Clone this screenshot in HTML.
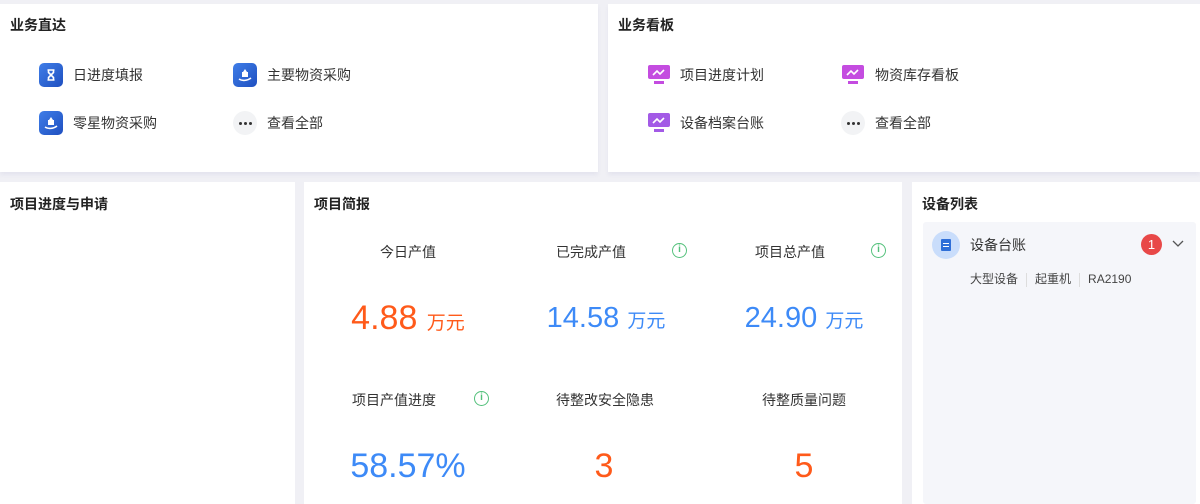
<!DOCTYPE html>
<html><head><meta charset="utf-8"><style>
*{margin:0;padding:0;box-sizing:border-box}
body{width:1200px;height:504px;background:#f0f0f5;font-family:"Liberation Sans","Noto Sans CJK SC",sans-serif;position:relative;overflow:hidden;color:#333}
.p{position:absolute;background:#fff}
.t{position:absolute;font-size:14px;font-weight:bold;color:#222}
.a{position:absolute;font-size:14px;color:#333;line-height:24px;white-space:nowrap}
.ic{position:absolute;width:24px;height:24px;border-radius:5px;background:linear-gradient(135deg,#3f7ee8,#1f4fc0)}
.more{position:absolute;width:24px;height:24px;border-radius:12px;background:#f2f3f5}
.more i{position:absolute;top:11px;width:3px;height:3px;border-radius:50%;background:#333}
.lb{position:absolute;font-size:14px;color:#333;transform:translateX(-50%);white-space:nowrap}
.num{position:absolute;font-size:34px;transform:translateX(-50%);white-space:nowrap;line-height:40px}
.num small{font-size:19px}
.bl{color:#3d8af7}.or{color:#ff5a1a}
.info{position:absolute;width:15px;height:15px;border:1.4px solid #52c07a;border-radius:50%;color:#52c07a;font-size:10px;text-align:center;line-height:12px;font-weight:bold}
</style></head><body>
<div class="p" style="left:0;top:4px;width:598px;height:168px;box-shadow:0 3px 4px #e4e4ee"></div>
<div class="p" style="left:608px;top:4px;width:592px;height:168px;box-shadow:0 3px 4px #e4e4ee"></div>
<div class="p" style="left:0;top:182px;width:295px;height:322px"></div>
<div class="p" style="left:304px;top:182px;width:598px;height:322px"></div>
<div class="p" style="left:912px;top:182px;width:288px;height:322px"></div>

<div class="t" style="left:10px;top:15px">业务直达</div>
<div class="ic" style="left:39px;top:63px"><svg width="24" height="24"><path d="M8.5 7h7M8.5 17h7M9.5 7v2.5l2.5 2.5 2.5-2.5V7M9.5 17v-2.5l2.5-2.5 2.5 2.5V17" stroke="#fff" stroke-width="1.6" fill="none"/></svg></div>
<div class="a" style="left:73px;top:63px">日进度填报</div>
<div class="ic" style="left:233px;top:63px"><svg width="24" height="24"><path d="M9 9h6v5H9z M10 9l2-3 2 3" fill="#fff"/><path d="M6 16c3 2 8 2 12-1" stroke="#fff" stroke-width="1.6" fill="none"/></svg></div>
<div class="a" style="left:267px;top:63px">主要物资采购</div>
<div class="ic" style="left:39px;top:111px"><svg width="24" height="24"><path d="M9 9h6v5H9z M10 9l2-3 2 3" fill="#fff"/><path d="M6 16c3 2 8 2 12-1" stroke="#fff" stroke-width="1.6" fill="none"/></svg></div>
<div class="a" style="left:73px;top:111px">零星物资采购</div>
<div class="more" style="left:233px;top:111px"><i style="left:6px"></i><i style="left:11px"></i><i style="left:16px"></i></div>
<div class="a" style="left:267px;top:111px">查看全部</div>

<div class="t" style="left:618px;top:15px">业务看板</div>
<svg style="position:absolute;left:648px;top:65px" width="22" height="20"><rect x="0" y="0" width="22" height="14" rx="2" fill="#c44ce0"/><rect x="6" y="16" width="10" height="3" fill="#c44ce0"/><path d="M5 10l4-4 3 3 4-4" stroke="#fff" stroke-width="1.6" fill="none"/></svg>
<div class="a" style="left:680px;top:63px">项目进度计划</div>
<svg style="position:absolute;left:842px;top:65px" width="22" height="20"><rect x="0" y="0" width="22" height="14" rx="2" fill="#c44ce0"/><rect x="6" y="16" width="10" height="3" fill="#c44ce0"/><path d="M5 10l4-4 3 3 4-4" stroke="#fff" stroke-width="1.6" fill="none"/></svg>
<div class="a" style="left:875px;top:63px">物资库存看板</div>
<svg style="position:absolute;left:648px;top:113px" width="22" height="20"><rect x="0" y="0" width="22" height="14" rx="2" fill="#a35ae6"/><rect x="6" y="16" width="10" height="3" fill="#a35ae6"/><path d="M5 10l4-4 3 3 4-4" stroke="#fff" stroke-width="1.6" fill="none"/></svg>
<div class="a" style="left:680px;top:111px">设备档案台账</div>
<div class="more" style="left:841px;top:111px"><i style="left:6px"></i><i style="left:11px"></i><i style="left:16px"></i></div>
<div class="a" style="left:875px;top:111px">查看全部</div>

<div class="t" style="left:10px;top:194px">项目进度与申请</div>
<div class="t" style="left:314px;top:194px">项目简报</div>

<div class="lb" style="left:408px;top:242px">今日产值</div>
<div class="lb" style="left:591px;top:242px">已完成产值</div>
<div class="info" style="left:672px;top:243px">i</div>
<div class="lb" style="left:790px;top:242px">项目总产值</div>
<div class="info" style="left:871px;top:243px">i</div>
<div class="num or" style="left:408px;top:298px">4.88 <small>万元</small></div>
<div class="num bl" style="left:606px;top:298px;font-size:29px">14.58 <small>万元</small></div>
<div class="num bl" style="left:804px;top:298px;font-size:29px">24.90 <small>万元</small></div>

<div class="lb" style="left:394px;top:390px">项目产值进度</div>
<div class="info" style="left:474px;top:391px">i</div>
<div class="lb" style="left:605px;top:390px">待整改安全隐患</div>
<div class="lb" style="left:804px;top:390px">待整质量问题</div>
<div class="num bl" style="left:408px;top:446px">58.57%</div>
<div class="num or" style="left:604px;top:446px">3</div>
<div class="num or" style="left:804px;top:446px">5</div>

<div class="t" style="left:922px;top:194px">设备列表</div>
<div style="position:absolute;left:923px;top:222px;width:273px;height:282px;background:#f5f6fa;border-radius:3px"></div>
<div style="position:absolute;left:932px;top:231px;width:28px;height:28px;border-radius:50%;background:#c9ddfb"></div>
<div style="position:absolute;left:941px;top:239px;width:10px;height:12px;background:#2f6fd8;border-radius:1px"></div>
<div style="position:absolute;left:943px;top:243px;width:6px;height:1px;background:#fff;box-shadow:0 3px 0 #fff"></div>
<div class="a" style="left:970px;top:233px">设备台账</div>
<div style="position:absolute;left:1141px;top:234px;width:21px;height:21px;border-radius:50%;background:#e84848;color:#fff;font-size:13px;text-align:center;line-height:21px">1</div>
<svg style="position:absolute;left:1172px;top:240px" width="12" height="8"><path d="M1 1l5 5 5-5" stroke="#555" stroke-width="1.3" fill="none"/></svg>
<div class="a" style="left:970px;top:267px;font-size:12px;color:#444">大型设备<span style="display:inline-block;width:1px;height:14px;background:#ddd;margin:0 8px;vertical-align:middle"></span>起重机<span style="display:inline-block;width:1px;height:14px;background:#ddd;margin:0 8px;vertical-align:middle"></span>RA2190</div>
</body></html>
